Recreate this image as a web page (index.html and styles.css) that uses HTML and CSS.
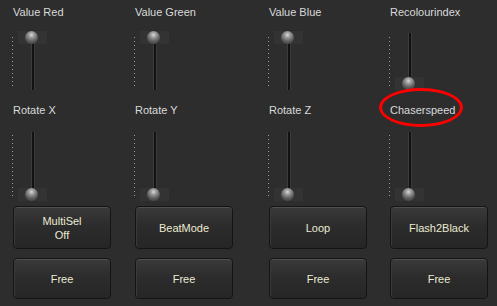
FILE: index.html
```html
<!DOCTYPE html>
<html lang="en">
<head>
    <meta charset="UTF-8">
    <title>Fader Page</title>
    <link rel="stylesheet" href="styles.css">
</head>
<body>
    <div class="panel">
        <div class="cell">
            <div class="label">Value Red</div>
            <div class="slider short"><div class="dots"></div><div class="track"></div><div class="knob top"></div></div>
        </div>
        <div class="cell">
            <div class="label">Value Green</div>
            <div class="slider short"><div class="dots"></div><div class="track"></div><div class="knob top"></div></div>
        </div>
        <div class="cell">
            <div class="label">Value Blue</div>
            <div class="slider short"><div class="dots"></div><div class="track"></div><div class="knob top"></div></div>
        </div>
        <div class="cell">
            <div class="label">Recolourindex</div>
            <div class="slider short"><div class="dots"></div><div class="track"></div><div class="knob bottom"></div></div>
        </div>

        <div class="cell">
            <div class="label">Rotate X</div>
            <div class="slider tall"><div class="dots"></div><div class="track"></div><div class="knob bottom"></div></div>
        </div>
        <div class="cell">
            <div class="label">Rotate Y</div>
            <div class="slider tall"><div class="dots"></div><div class="track"></div><div class="knob bottom"></div></div>
        </div>
        <div class="cell">
            <div class="label">Rotate Z</div>
            <div class="slider tall"><div class="dots"></div><div class="track"></div><div class="knob bottom"></div></div>
        </div>
        <div class="cell">
            <div class="label marked">Chaserspeed<span class="circle"></span></div>
            <div class="slider tall"><div class="dots"></div><div class="track"></div><div class="knob bottom"></div></div>
        </div>

        <button class="btn">MultiSel<br>Off</button>
        <button class="btn">BeatMode</button>
        <button class="btn">Loop</button>
        <button class="btn">Flash2Black</button>

        <button class="btn">Free</button>
        <button class="btn">Free</button>
        <button class="btn">Free</button>
        <button class="btn">Free</button>
    </div>
</body>
</html>
```

FILE: styles.css
```css
body {
    margin: 0;
    background: #2d2d2d;
    font-family: "Liberation Sans", Arial, sans-serif;
    font-size: 11px;
    color: #dadada;
    overflow: hidden;
}
.panel {
    display: grid;
    grid-template-columns: 122px 134px 121px 108px;
    padding-left: 12px;
}
.cell {
    height: 98px;
}
.cell:nth-child(n+5) {
    height: 108px;
}
.label {
    position: relative;
    padding: 5px 0 0 1px;
    line-height: 14px;
}
.marked .circle {
    position: absolute;
    left: -10px;
    top: -10px;
    width: 78px;
    height: 33px;
    border: 3px solid #f00;
    border-radius: 50%;
}
.slider {
    position: relative;
    margin-top: 12px;
    width: 40px;
}
.slider.short {
    height: 62px;
}
.slider.tall {
    height: 72px;
}
.dots {
    position: absolute;
    left: 0;
    top: 6px;
    width: 1px;
    background: repeating-linear-gradient(to bottom, #9a9a9a 0 1px, transparent 1px 4px);
}
.short .dots {
    height: 50px;
}
.tall .dots {
    height: 61px;
}
.track {
    position: absolute;
    left: 19px;
    width: 2px;
    background: #121212;
    border-left: 1px solid #3c3c3c;
    border-right: 1px solid #3a3a3a;
}
.short .track {
    top: 2px;
    height: 57px;
}
.tall .track {
    top: 3px;
    height: 62px;
}
.knob {
    position: absolute;
    left: 6px;
    width: 29px;
    height: 13px;
    background: #333;
}
.knob::after {
    content: "";
    position: absolute;
    left: 7px;
    top: 0;
    width: 13px;
    height: 13px;
    border-radius: 50%;
    background: radial-gradient(circle at 50% 30%, #d8d8d8 0, #9a9a9a 25%, #5a5a5a 60%, #3a3a3a 100%);
}
.knob.top {
    top: 0;
}
.short .knob.bottom {
    top: 46px;
}
.tall .knob.bottom {
    top: 59px;
}
.btn {
    width: 98px;
    height: 43px;
    margin: 0 0 9px 1px;
    padding: 0;
    border: 1px solid #141414;
    border-radius: 4px;
    background: linear-gradient(#3a3a3a, #2c2c2c 45%, #262626);
    box-shadow: inset 0 1px 0 #505050, inset 1px 0 0 #3a3a3a;
    color: #ecead2;
    font-family: "Liberation Sans", Arial, sans-serif;
    font-size: 11px;
    line-height: 14px;
}
.btn:nth-of-type(n+5) {
    height: 41px;
}
```
